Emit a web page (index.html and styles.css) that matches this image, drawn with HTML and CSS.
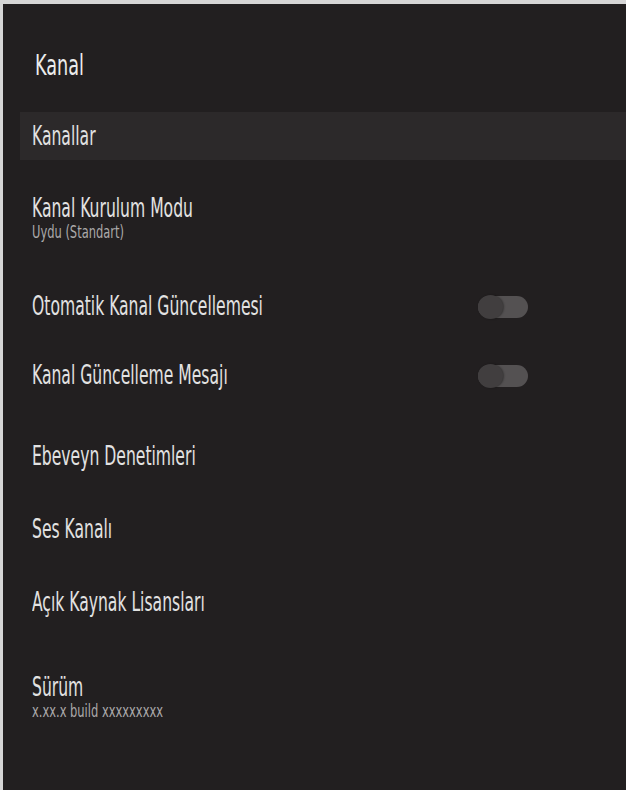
FILE: index.html
```html
<!DOCTYPE html>
<html lang="tr">
<head>
    <meta charset="UTF-8">
    <meta name="viewport" content="width=device-width, initial-scale=1.0">
    <title>Kanal</title>
    <link rel="stylesheet" href="styles.css">
</head>
<body>
    <div class="panel">
        <header class="panel-header">
            <h1>Kanal</h1>
        </header>
        <ul class="menu">
            <li class="row selected"><span class="label">Kanallar</span></li>
            <li class="row two-line">
                <span class="label">Kanal Kurulum Modu</span>
                <span class="sub">Uydu (Standart)</span>
            </li>
            <li class="row toggle-row">
                <span class="label">Otomatik Kanal Güncellemesi</span>
                <span class="switch"></span>
            </li>
            <li class="row toggle-row last-toggle">
                <span class="label">Kanal Güncelleme Mesajı</span>
                <span class="switch"></span>
            </li>
            <li class="row"><span class="label">Ebeveyn Denetimleri</span></li>
            <li class="row"><span class="label">Ses Kanalı</span></li>
            <li class="row"><span class="label">Açık Kaynak Lisansları</span></li>
            <li class="row two-line">
                <span class="label">Sürüm</span>
                <span class="sub">x.xx.x build xxxxxxxxx</span>
            </li>
        </ul>
    </div>
</body>
</html>
```

FILE: styles.css
```css
html, body {
    margin: 0;
    padding: 0;
    height: 100%;
}

body {
    background-color: #d6d6d6;
    font-family: "DejaVu Sans Condensed", "Liberation Sans Narrow", "Liberation Sans", sans-serif;
    padding: 4px 0 0 3px;
    box-sizing: border-box;
}

.panel {
    background-color: #221f20;
    height: 100%;
    overflow: hidden;
}

.panel-header {
    height: 108px;
    box-sizing: border-box;
    padding: 16px 0 0 32px;
    display: flex;
    align-items: center;
}

.panel-header h1 {
    margin: 0;
    font-size: 28px;
    font-weight: normal;
    line-height: 1.1;
    color: #ececec;
    transform: scaleX(0.7);
    transform-origin: left center;
}

.menu {
    list-style: none;
    margin: 0;
    padding: 0;
}

.row {
    height: 73px;
    margin-left: 17px;
    padding: 0 98px 0 12px;
    display: flex;
    align-items: center;
    justify-content: space-between;
    box-sizing: border-box;
}

.row .label {
    font-size: 26px;
    line-height: 1.1;
    color: #e2e2e2;
    transform: scaleX(0.667);
    transform-origin: left center;
    white-space: nowrap;
}

.row.selected {
    height: 48px;
    background-color: #2c292a;
}

.row.two-line {
    height: 112px;
    padding-top: 3px;
    flex-direction: column;
    align-items: flex-start;
    justify-content: center;
}

.row .sub {
    font-size: 17px;
    line-height: 1;
    margin-top: 2px;
    color: #aba9aa;
    transform: scaleX(0.75);
    transform-origin: left center;
    white-space: nowrap;
}

.row.toggle-row {
    height: 69px;
}

.row.last-toggle {
    margin-bottom: 10px;
}

.switch {
    position: relative;
    width: 50px;
    height: 22px;
    border-radius: 11px;
    background-color: #545152;
}

.switch::before {
    content: "";
    position: absolute;
    left: 0;
    top: -1px;
    width: 25px;
    height: 24px;
    border-radius: 50%;
    background-color: #413e3f;
    box-shadow: 1px 0 2px rgba(0, 0, 0, 0.35);
}
```
